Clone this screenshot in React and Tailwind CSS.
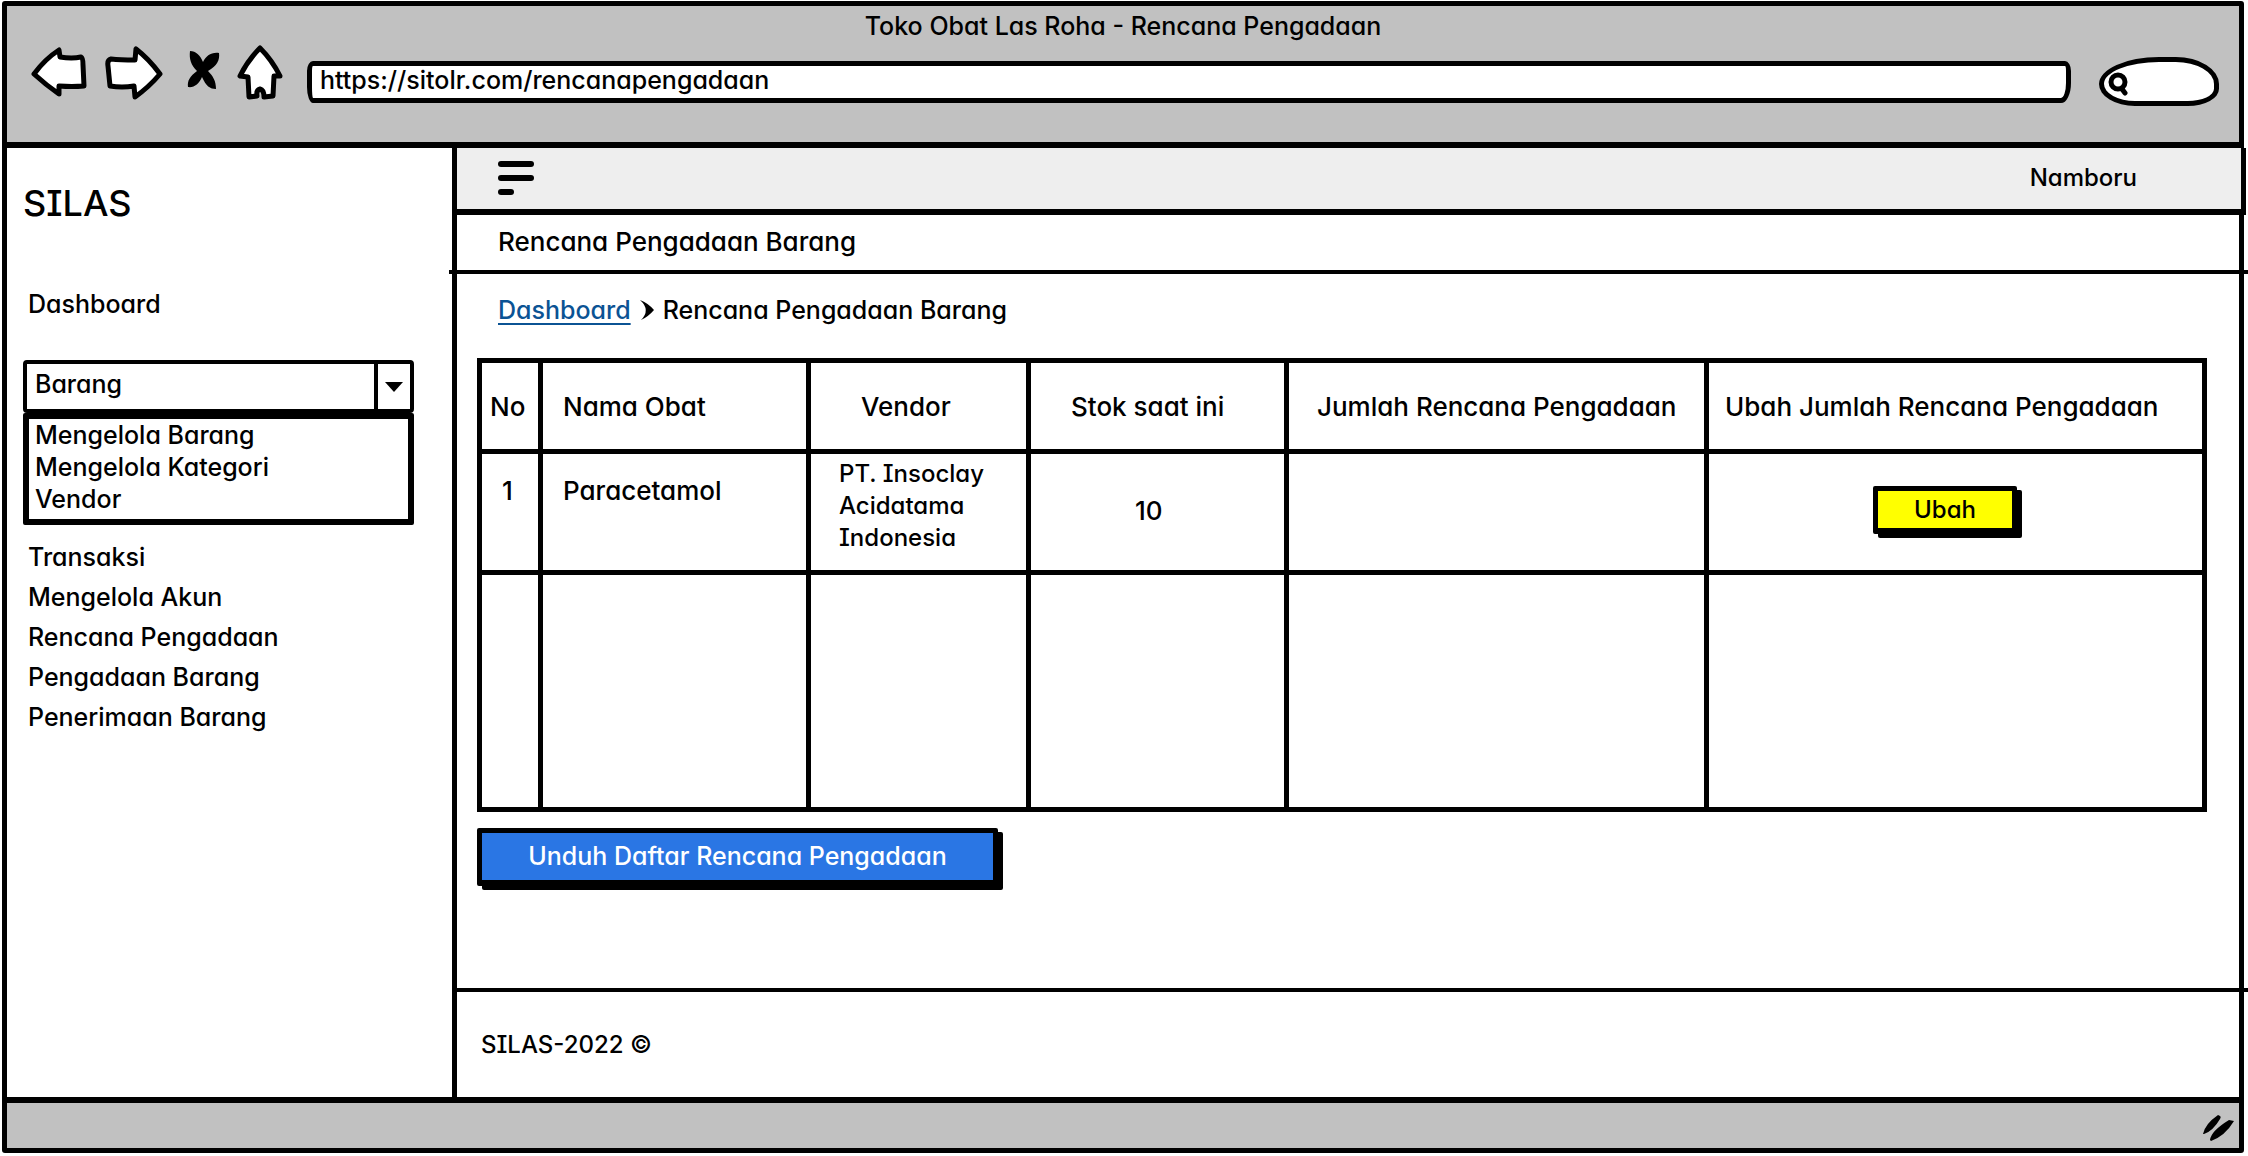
const stroke = { fill: "#fff", stroke: "#000", strokeWidth: 5, strokeLinejoin: "round", strokeLinecap: "round" };

function BackIcon() {
  return (
    <svg viewBox="31 46 60 58" className="h-[58px] w-[60px]" aria-hidden="true">
      <path {...stroke} d="M34 75 Q45 60 59 51 L60 58 Q72 60 81 58 Q83 59 83 66 L84 87 Q72 88 59 87 L59 95 Q46 86 34 75Z" />
    </svg>
  );
}
function ForwardIcon() {
  return (
    <svg viewBox="103 46 60 58" className="h-[58px] w-[60px]" aria-hidden="true">
      <path {...stroke} d="M160 75 Q149 60 136 50 L135 61 Q120 61 111 60 Q107 61 108 67 L110 87 Q122 89 134 87 L135 98 Q149 88 160 75Z" />
    </svg>
  );
}
function StopIcon() {
  return (
    <svg viewBox="175 46 50 58" className="h-[58px] w-[50px]" aria-hidden="true">
      <path d="M190 52 C196 52 200 56 203 63 C206 57 211 53 219 54 C220 61 217 67 208 72 C213 77 216 82 216 90 C210 90 206 87 202 78 C199 85 194 89 188 88 C187 82 190 77 197 72 C191 66 189 60 190 52Z" />
    </svg>
  );
}
function HomeIcon() {
  return (
    <svg viewBox="237 46 46 58" className="h-[58px] w-[46px]" aria-hidden="true">
      <path {...stroke} d="M260 49 Q248 61 240 77 L248 78 L249 98 L257 97 Q256 91 260 90 Q264 91 264 98 L273 97 L274 77 L280 77 Q272 61 260 49Z" />
    </svg>
  );
}

const navButtons = [
  ["Kembali", BackIcon],
  ["Maju", ForwardIcon],
  ["Berhenti", StopIcon],
  ["Beranda", HomeIcon],
];

function BrowserBar() {
  return (
    <header className="h-[142px] border-b-[6px] border-black bg-[#c1c1c1]">
      <h1 className="pt-[2px] text-center leading-9">Toko Obat Las Roha - Rencana Pengadaan</h1>
      <div className="flex items-start pt-px pl-6">
        <nav className="flex items-center gap-3">
          {navButtons.map(([label, Icon]) => (
            <button key={label} type="button" aria-label={label}>
              <Icon />
            </button>
          ))}
        </nav>
        <input
          type="text"
          aria-label="Alamat"
          defaultValue="https://sitolr.com/rencanapengadaan"
          className="mt-4 ml-6 h-[42px] min-w-0 flex-1 rounded-[6px_6px_10px_6px/10px_10px_20px_16px] border-[5px] border-black bg-white px-2 pb-1"
        />
        <label className="mt-3 mr-5 ml-7 flex h-[49px] w-[120px] items-center rounded-[50%_36%_26%_30%/55%_55%_35%_45%] border-[5px] border-black bg-white pt-1 pl-1">
          <svg viewBox="0 0 20 24" className="h-6 w-5 shrink-0" fill="none" stroke="#000" strokeWidth="5" strokeLinecap="round" aria-hidden="true">
            <circle cx="10" cy="10" r="7" />
            <path d="M14 17 L17 21" />
          </svg>
          <input type="search" aria-label="Cari" className="w-full min-w-0 bg-transparent outline-none" />
        </label>
      </div>
    </header>
  );
}

const barangItems = ["Mengelola Barang", "Mengelola Kategori", "Vendor"];
const menuItems = ["Transaksi", "Mengelola Akun", "Rencana Pengadaan", "Pengadaan Barang", "Penerimaan Barang"];

function Sidebar() {
  return (
    <aside className="w-[450px] shrink-0 border-r-[5px] border-black pl-4">
      <h2 className="pt-[30px] text-4xl leading-[50px]">SILAS</h2>
      <a href="#dashboard" className="mt-14 ml-[5px] block w-fit leading-10">
        Dashboard
      </a>
      <div className="mt-9 w-[391px]">
        <div className="relative flex h-[53px] rounded-[4px] border-4 border-black">
          <select aria-label="Barang" className="w-full appearance-none bg-transparent pb-1 pl-2">
            <option>Barang</option>
          </select>
          <span className="pointer-events-none absolute inset-y-0 right-0 flex w-9 items-center justify-center border-l-4 border-black">
            <svg viewBox="0 0 18 10" className="h-[10px] w-[18px]" aria-hidden="true">
              <path d="M0 0 H18 L9 10Z" />
            </svg>
          </span>
        </div>
        <ul className="rounded-[2px] border-[6px] border-black pb-1 pl-[6px] leading-8">
          {barangItems.map((item) => (
            <li key={item}>
              <a href="#barang">{item}</a>
            </li>
          ))}
        </ul>
      </div>
      <ul className="mt-3 ml-[5px] leading-10">
        {menuItems.map((item) => (
          <li key={item}>
            <a href="#menu">{item}</a>
          </li>
        ))}
      </ul>
    </aside>
  );
}

function Button({ className, children }) {
  return (
    <button type="button" className={"rounded-[2px] border-[5px] border-b-[6px] border-black shadow-[5px_4px_0_#000] " + className}>
      {children}
    </button>
  );
}

const cell = "border-[5px] border-black p-0 text-left font-medium ";

function PlanTable() {
  return (
    <table className="w-full table-fixed border-collapse border-[5px] border-black text-[26px]">
      <colgroup>
        <col className="w-[61px]" />
        <col className="w-[268px]" />
        <col className="w-[220px]" />
        <col className="w-[258px]" />
        <col className="w-[420px]" />
        <col />
      </colgroup>
      <thead>
        <tr className="h-[91px]">
          <th className={cell + "pl-2"}>No</th>
          <th className={cell + "pl-5"}>Nama Obat</th>
          <th className={cell + "pl-[50px]"}>Vendor</th>
          <th className={cell + "pl-10"}>Stok saat ini</th>
          <th className={cell + "pl-7"}>Jumlah Rencana Pengadaan</th>
          <th className={cell + "pl-4"}>Ubah Jumlah Rencana Pengadaan</th>
        </tr>
      </thead>
      <tbody>
        <tr className="h-[121px]">
          <td className={cell + "pb-11 pl-5"}>1</td>
          <td className={cell + "pb-11 pl-5"}>Paracetamol</td>
          <td className={cell + "pb-3 pl-7 text-2xl leading-8"}>
            PT. Insoclay
            <br />
            Acidatama
            <br />
            Indonesia
          </td>
          <td className={cell + "pb-1 pl-[104px]"}>10</td>
          <td className={cell} />
          <td className={cell + "pb-1 pl-[164px]"}>
            <Button className="h-12 w-36 bg-[#ffff00] text-2xl">Ubah</Button>
          </td>
        </tr>
        <tr className="h-[237px]">
          {[0, 1, 2, 3, 4, 5].map((n) => (
            <td key={n} className={cell} />
          ))}
        </tr>
      </tbody>
    </table>
  );
}

function Main() {
  return (
    <main className="flex min-w-0 flex-1 flex-col">
      <div className="-mr-[7px] flex h-[67px] items-center justify-between border-r-[5px] border-b-[6px] border-black bg-[#eeeeee] pr-[104px] pb-px pl-[41px]">
        <button type="button" aria-label="Menu" className="flex flex-col gap-2">
          <span className="h-[6px] w-9 rounded-full bg-black" />
          <span className="h-[6px] w-9 rounded-full bg-black" />
          <span className="h-[6px] w-4 rounded-full bg-black" />
        </button>
        <span className="text-2xl">Namboru</span>
      </div>
      <div className="-mr-[10px] -ml-2 flex h-[59px] items-center border-b-4 border-black pb-[2px] pl-[49px]">
        <h2 className="text-[26px] font-medium">Rencana Pengadaan Barang</h2>
      </div>
      <nav className="mt-4 flex items-center pl-[41px] leading-10">
        <a href="#dashboard" className="text-[#0b5394] underline decoration-2 underline-offset-4">
          Dashboard
        </a>
        <svg viewBox="0 0 14 20" className="mx-[9px] h-5 w-[14px]" aria-hidden="true">
          <path d="M0 0 Q8 3 14 10 Q8 17 1 20 Q11 10 0 0Z" />
        </svg>
        <span>Rencana Pengadaan Barang</span>
      </nav>
      <div className="mt-7 pr-8 pl-5">
        <PlanTable />
        <Button className="mt-4 h-[58px] w-[521px] bg-[#2a76e4] text-white">Unduh Daftar Rencana Pengadaan</Button>
      </div>
      <footer className="mt-auto -mr-[10px] flex h-[109px] items-center border-t-4 border-black pl-6 text-2xl">SILAS-2022 ©</footer>
    </main>
  );
}

export default function App() {
  return (
    <div className="flex min-h-screen overflow-hidden bg-white pt-px pr-1 pb-[3px] pl-[2px] font-['Inter',sans-serif] text-[25px] font-[450] text-black [font-feature-settings:'cv11','cv08']">
      <div className="flex min-w-0 flex-1 flex-col rounded-[3px] border-[5px] border-black">
        <BrowserBar />
        <div className="flex flex-1">
          <Sidebar />
          <Main />
        </div>
        <div className="flex h-[51px] items-center justify-end border-t-[6px] border-black bg-[#c1c1c1] pt-1 pr-1">
          <svg viewBox="0 0 32 26" className="h-[26px] w-8" aria-hidden="true">
            <path d="M0 19 Q2 9 15 0 Q19 1 17 4 Q10 16 1 19Z M7 25 Q8 16 26 5 L31 6 Q22 21 8 26Z" />
          </svg>
        </div>
      </div>
    </div>
  );
}
